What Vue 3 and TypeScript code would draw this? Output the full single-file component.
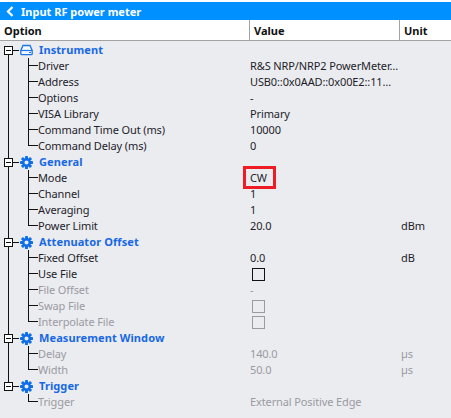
<script setup lang="ts">
interface Row {
  label: string;
  value?: string;
  unit?: string;
  check?: boolean;
  disabled?: boolean;
  marked?: boolean;
}

interface Group {
  title: string;
  icon: "drive" | "gear";
  rows: Row[];
}

const groups: Group[] = [
  {
    title: "Instrument",
    icon: "drive",
    rows: [
      { label: "Driver", value: "R&S NRP/NRP2 PowerMeter…" },
      { label: "Address", value: "USB0::0x0AAD::0x00E2::11…" },
      { label: "Options", value: "-" },
      { label: "VISA Library", value: "Primary" },
      { label: "Command Time Out (ms)", value: "10000" },
      { label: "Command Delay (ms)", value: "0" },
    ],
  },
  {
    title: "General",
    icon: "gear",
    rows: [
      { label: "Mode", value: "CW", marked: true },
      { label: "Channel", value: "1" },
      { label: "Averaging", value: "1" },
      { label: "Power Limit", value: "20.0", unit: "dBm" },
    ],
  },
  {
    title: "Attenuator Offset",
    icon: "gear",
    rows: [
      { label: "Fixed Offset", value: "0.0", unit: "dB" },
      { label: "Use File", check: true },
      { label: "File Offset", value: "-", disabled: true },
      { label: "Swap File", check: true, disabled: true },
      { label: "Interpolate File", check: true, disabled: true },
    ],
  },
  {
    title: "Measurement Window",
    icon: "gear",
    rows: [
      { label: "Delay", value: "140.0", unit: "µs", disabled: true },
      { label: "Width", value: "50.0", unit: "µs", disabled: true },
    ],
  },
  {
    title: "Trigger",
    icon: "gear",
    rows: [{ label: "Trigger", value: "External Positive Edge", disabled: true }],
  },
];

const teeth = [0, 45, 90, 135];
</script>

<template>
  <div class="panel">
    <div class="titlebar">
      <svg class="back" width="8" height="11" viewBox="0 0 8 11">
        <path d="M6.5 1 2 5.5 6.5 10" fill="none" stroke="#fff" stroke-width="2.2" />
      </svg>
      <span>Input RF power meter</span>
    </div>

    <div class="head">
      <div class="col-option">Option</div>
      <div class="col-value">Value</div>
      <div class="col-unit">Unit</div>
    </div>

    <div class="tree">
      <template v-for="(group, g) in groups" :key="group.title">
        <div class="row group" :class="{ last: g === groups.length - 1, first: g === 0 }">
          <span class="trunk"></span>
          <span class="box"><i></i></span>
          <span class="stub"></span>
          <svg v-if="group.icon === 'drive'" class="icon" width="13" height="12" viewBox="0 0 13 12">
            <path d="M3 1.5h7l2.2 5v3.2a1 1 0 0 1-1 1H1.8a1 1 0 0 1-1-1V6.5z" fill="#f4f8fe" stroke="#1a76e6" stroke-width="1.3" />
            <path d="M1 6.5h11" stroke="#1a76e6" stroke-width="1.2" />
            <path d="M9 8.5h2" stroke="#1a76e6" stroke-width="1.2" />
          </svg>
          <svg v-else class="icon" width="13" height="13" viewBox="0 0 13 13">
            <g fill="#0f6fe8">
              <rect v-for="t in teeth" :key="t" x="5" y="0" width="3" height="13" rx="0.4" :transform="`rotate(${t} 6.5 6.5)`" />
            </g>
            <circle cx="6.5" cy="6.5" r="3.2" fill="none" stroke="#0f6fe8" stroke-width="2.4" />
            <circle cx="6.5" cy="6.5" r="2" fill="#ebecef" />
          </svg>
          <span class="group-title">{{ group.title }}</span>
        </div>

        <div
          v-for="(row, r) in group.rows"
          :key="row.label"
          class="row item"
          :class="{ disabled: row.disabled, tail: r === group.rows.length - 1 }"
        >
          <span v-if="g < groups.length - 1" class="trunk"></span>
          <span class="branch"></span>
          <div class="label">{{ row.label }}</div>
          <div class="value">
            <span v-if="row.check" class="check"></span>
            <span v-else :class="{ marked: row.marked }">{{ row.value }}</span>
          </div>
          <div class="unit">{{ row.unit }}</div>
        </div>
      </template>
    </div>
  </div>
</template>

<style scoped>
.panel {
  width: 451px;
  height: 418px;
  padding-top: 2px;
  box-sizing: border-box;
  background: #ebecef;
  overflow: hidden;
  font-family: "Noto Sans", "Liberation Sans", sans-serif;
  font-size: 11px;
  letter-spacing: -0.12px;
  color: #1d1d2b;
  position: relative;
}

.panel::before {
  content: "";
  position: absolute;
  left: 0;
  right: 0;
  top: 0;
  height: 2px;
  background: #fff;
}

.titlebar {
  height: 18px;
  background: #0090ff;
  color: #fff;
  font-weight: 700;
  display: flex;
  align-items: center;
  padding-left: 6px;
  gap: 7px;
  letter-spacing: 0;
}

.head {
  display: flex;
  height: 21px;
  background: #fff;
  border-bottom: 1px solid #a3a3a3;
  box-sizing: border-box;
  font-weight: 700;
  color: #111;
  line-height: 21px;
  letter-spacing: 0;
}

.head > div {
  box-sizing: border-box;
}

.col-option {
  width: 250px;
  padding-left: 4px;
  border-right: 1px solid #a3a3a3;
}

.col-value {
  width: 150px;
  padding-left: 4px;
  border-right: 1px solid #a3a3a3;
}

.col-unit {
  flex: 1;
  padding-left: 4px;
}

.tree {
  padding-top: 1px;
}

.row {
  height: 16px;
  line-height: 16px;
  display: flex;
  align-items: center;
  position: relative;
  white-space: nowrap;
}

.trunk {
  position: absolute;
  left: 8px;
  top: 0;
  bottom: 0;
  width: 1px;
  background: #111;
}

.first .trunk {
  top: 8px;
}

.last .trunk {
  bottom: 8px;
}

.box {
  position: absolute;
  left: 4px;
  top: 4px;
  width: 9px;
  height: 9px;
  box-sizing: border-box;
  border: 1px solid #111;
  background: #fff;
}

.box i {
  position: absolute;
  left: 1px;
  right: 1px;
  top: 3px;
  height: 1px;
  background: #111;
}

.stub {
  position: absolute;
  left: 13px;
  top: 8px;
  width: 6px;
  height: 1px;
  background: #111;
}

.icon {
  position: absolute;
  left: 20px;
  top: 2px;
}

.group-title {
  margin-left: 39px;
  font-weight: 700;
  color: #1768e4;
  letter-spacing: 0.1px;
}

.branch {
  position: absolute;
  left: 28px;
  top: 0;
  width: 10px;
  height: 8px;
  box-sizing: border-box;
  border-left: 1px solid #111;
  border-bottom: 1px solid #111;
}

.item:not(.tail)::after {
  content: "";
  position: absolute;
  left: 28px;
  top: 8px;
  bottom: 0;
  width: 1px;
  background: #111;
}

.label {
  width: 250px;
  padding-left: 38px;
  box-sizing: border-box;
}

.value {
  width: 151px;
  display: flex;
  align-items: center;
  position: relative;
}

.unit {
  flex: 1;
}

.disabled .label,
.disabled .value,
.disabled .unit {
  color: #9a9aa3;
}

.check {
  width: 13px;
  height: 13px;
  margin-left: 2px;
  box-sizing: border-box;
  border: 1.5px solid #111;
}

.disabled .check {
  border-color: #9b9b9b;
}

.marked {
  position: relative;
}

.marked::after {
  content: "";
  position: absolute;
  left: -7px;
  top: -4px;
  width: 33px;
  height: 23px;
  box-sizing: border-box;
  border: 3px solid #ee1c25;
}
</style>
